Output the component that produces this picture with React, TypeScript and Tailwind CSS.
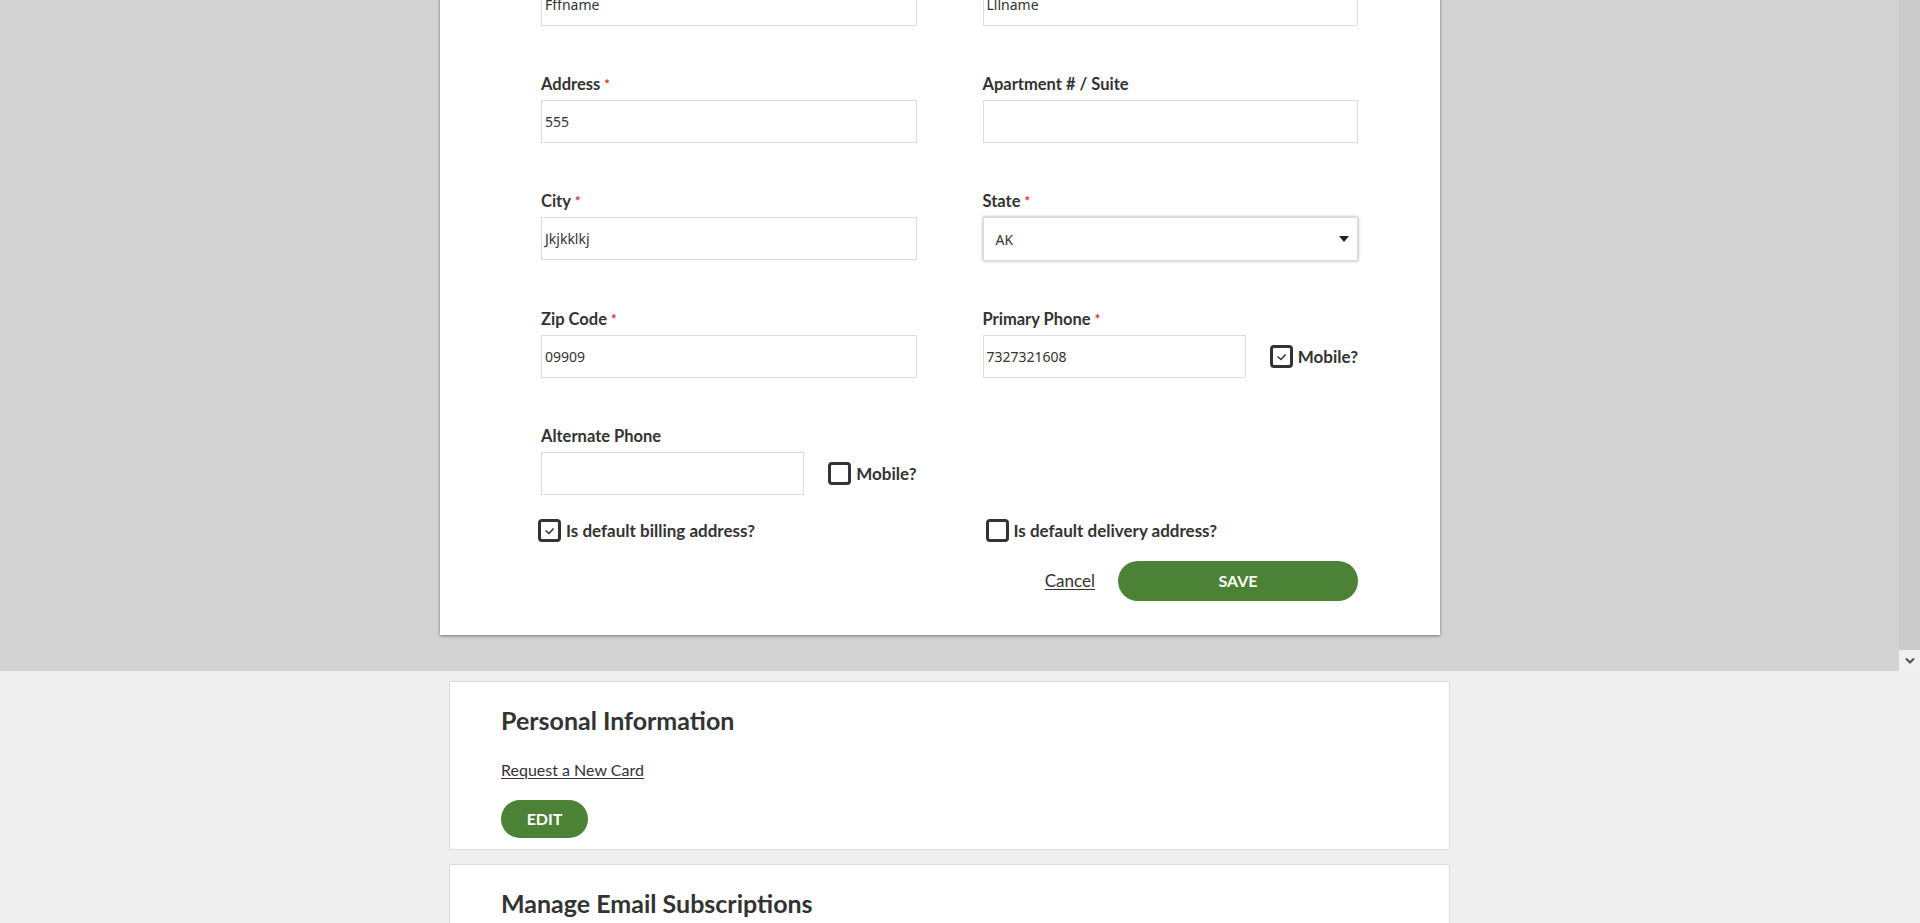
import React from "react";

function Label({ text, required }: { text: string; required?: boolean }) {
  return (
    <div className="h-[20px] mb-[6px] text-[16.5px] leading-[20px] font-bold text-[#333]">
      {text}
      {required && <span className="ml-[4px] text-[13px] text-[#e1261c] align-top">*</span>}
    </div>
  );
}

function TextInput({ value, className = "w-full" }: { value?: string; className?: string }) {
  return (
    <div
      className={`h-[43px] border border-[#dcdcdc] bg-white flex items-center pl-[3px] font-['Noto_Sans',sans-serif] text-[14px] text-[#333] ${className}`}
    >
      {value}
    </div>
  );
}

function Checkbox({ checked, label }: { checked?: boolean; label: string }) {
  return (
    <div className="flex items-center gap-[5px]">
      <div className="w-[23px] h-[23px] border-[3px] border-[#333] rounded-[4px] bg-white flex items-center justify-center">
        {checked && (
          <svg width="11" height="8" viewBox="0 0 11 8">
            <path d="M1.5 3.5 L5 6.5 L9.5 1.5" fill="none" stroke="#333" strokeWidth="1.6" />
          </svg>
        )}
      </div>
      <span className="text-[17px] font-bold text-[#333] leading-[20px]">{label}</span>
    </div>
  );
}

export default function App() {
  return (
    <main className="min-h-screen bg-[#efefef] font-['Lato',sans-serif] text-[#333]">
      {/* Modal overlay */}
      <div className="flex h-[671px] overflow-hidden bg-[#d3d3d3]">
        <div className="flex-1">
          <div className="ml-[440px] w-[1000px] -mt-[43px] bg-white shadow-[0_1px_3px_rgba(0,0,0,0.45)] pl-[101px] pr-[82px] pb-[34px]">
            <div className="grid grid-cols-2 gap-x-[66px] gap-y-[48px]">
              <div>
                <Label text="First Name" required />
                <TextInput value="Fffname" />
              </div>
              <div>
                <Label text="Last Name" required />
                <TextInput value="Lllname" />
              </div>

              <div>
                <Label text="Address" required />
                <TextInput value="555" />
              </div>
              <div>
                <Label text="Apartment # / Suite" />
                <TextInput />
              </div>

              <div>
                <Label text="City" required />
                <TextInput value="Jkjkklkj" />
              </div>
              <div>
                <Label text="State" required />
                <div className="h-[44px] border border-[#dcdcdc] bg-white shadow-[0_0_3px_rgba(0,0,0,0.35)] flex items-center justify-between pl-[12px] pr-[8px] font-['Noto_Sans',sans-serif] text-[14px]">
                  <span>AK</span>
                  <svg width="10" height="6" viewBox="0 0 10 6">
                    <path d="M0 0 H10 L5 6 Z" fill="#222" />
                  </svg>
                </div>
              </div>

              <div>
                <Label text="Zip Code" required />
                <TextInput value="09909" />
              </div>
              <div>
                <Label text="Primary Phone" required />
                <div className="flex items-center justify-between">
                  <TextInput value="7327321608" className="w-[263px]" />
                  <Checkbox checked label="Mobile?" />
                </div>
              </div>

              <div>
                <Label text="Alternate Phone" />
                <div className="flex items-center justify-between">
                  <TextInput className="w-[263px]" />
                  <Checkbox label="Mobile?" />
                </div>
              </div>
              <div />
            </div>

            <div className="grid grid-cols-2 gap-x-[66px] mt-[24px]">
              <div className="-ml-[3px]">
                <Checkbox checked label="Is default billing address?" />
              </div>
              <div className="ml-[3px]">
                <Checkbox label="Is default delivery address?" />
              </div>
            </div>

            <div className="flex justify-end items-center gap-[23px] mt-[19px]">
              <a className="text-[17px] underline underline-offset-2 text-[#333] cursor-pointer">Cancel</a>
              <button className="w-[240px] h-[40px] rounded-full bg-[#4c8235] text-white text-[16px] font-bold">
                SAVE
              </button>
            </div>
          </div>
        </div>
        {/* scrollbar */}
        <div className="w-[21px] bg-[#cbcbcb] flex flex-col justify-end">
          <div className="h-[21px] bg-[#f0f0f0] flex items-center justify-center">
            <svg width="10" height="7" viewBox="0 0 10 7">
              <path d="M1 1.5 L5 5.5 L9 1.5" fill="none" stroke="#505050" strokeWidth="2" />
            </svg>
          </div>
        </div>
      </div>

      {/* Page cards */}
      <div className="ml-[449px] w-[1001px] pt-[10px] flex flex-col gap-[14px]">
        <section className="bg-white border border-[#dcdcdc] pl-[51px] pt-[22px] pb-[11px]">
          <h2 className="text-[25px] leading-[32px] font-bold text-[#333]">Personal Information</h2>
          <a className="block mt-[22px] text-[16px] leading-[24px] underline underline-offset-2 text-[#333] cursor-pointer w-fit">
            Request a New Card
          </a>
          <button className="mt-[18px] w-[87px] h-[38px] rounded-full bg-[#4c8235] text-white text-[16px] font-bold">
            EDIT
          </button>
        </section>
        <section className="bg-white border border-[#dcdcdc] pl-[51px] pt-[22px] pb-[40px]">
          <h2 className="text-[25px] leading-[32px] font-bold text-[#333]">Manage Email Subscriptions</h2>
        </section>
      </div>
    </main>
  );
}
